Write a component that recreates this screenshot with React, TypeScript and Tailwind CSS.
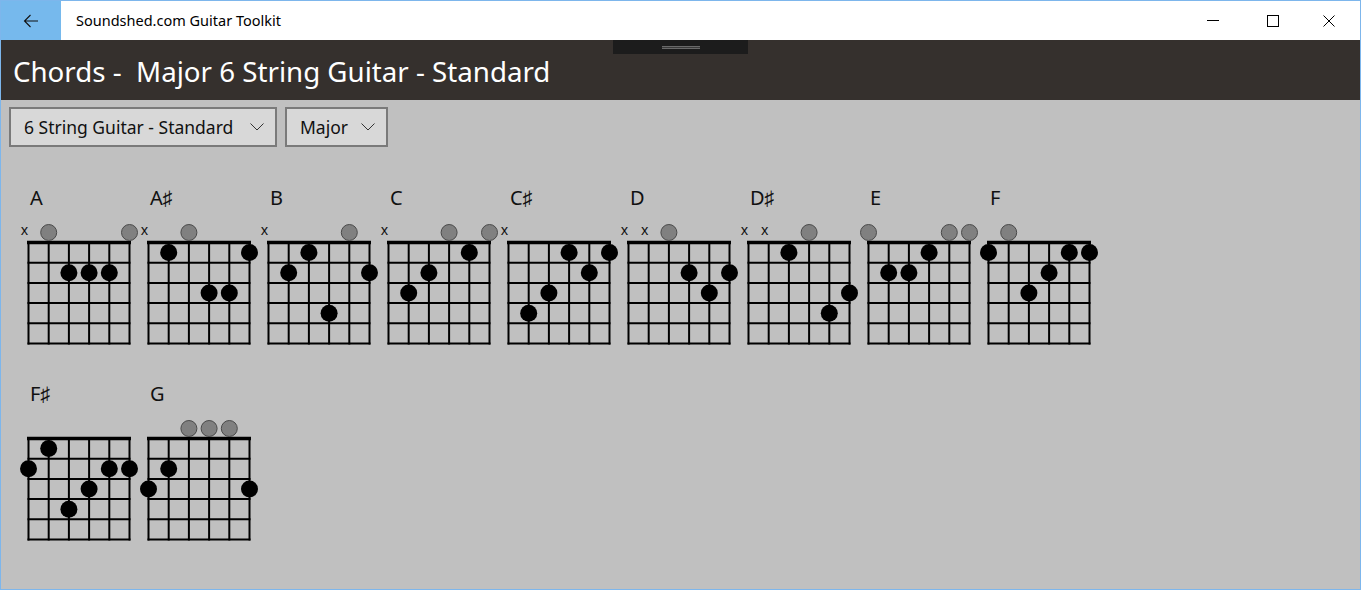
import React from 'react';

type Chord = { name: string; frets: number[] };

// -1 = muted, 0 = open, n = fret
const chords: Chord[] = [
  { name: 'A', frets: [-1, 0, 2, 2, 2, 0] },
  { name: 'A♯', frets: [-1, 1, 0, 3, 3, 1] },
  { name: 'B', frets: [-1, 2, 1, 4, 0, 2] },
  { name: 'C', frets: [-1, 3, 2, 0, 1, 0] },
  { name: 'C♯', frets: [-1, 4, 3, 1, 2, 1] },
  { name: 'D', frets: [-1, -1, 0, 2, 3, 2] },
  { name: 'D♯', frets: [-1, -1, 1, 0, 4, 3] },
  { name: 'E', frets: [0, 2, 2, 1, 0, 0] },
  { name: 'F', frets: [1, 0, 3, 2, 1, 1] },
  { name: 'F♯', frets: [2, 1, 4, 3, 2, 2] },
  { name: 'G', frets: [3, 2, 0, 0, 0, 3] },
];

const X0 = 18.5;
const Y0 = 30.5;
const STEP = 20.2;

function ChordDiagram({ chord }: { chord: Chord }) {
  const strings = [0, 1, 2, 3, 4, 5];
  const frets = [0, 1, 2, 3, 4, 5];
  const right = X0 + STEP * 5;
  const bottom = Y0 + STEP * 5;

  return (
    <div className="w-[120px] flex flex-col">
      <div className="h-[28px] leading-[28px] pl-[20px] text-[20px] text-[#111]">{chord.name}</div>
      <svg width="120" height="140" viewBox="0 0 120 140" className="overflow-visible">
        {strings.map((s) => (
          <line key={'s' + s} x1={X0 + STEP * s} y1={Y0} x2={X0 + STEP * s} y2={bottom + 1} stroke="#000" strokeWidth={2} />
        ))}
        {frets.slice(1).map((f) => (
          <line key={'f' + f} x1={X0 - 1} y1={Y0 + STEP * f} x2={right + 1} y2={Y0 + STEP * f} stroke="#000" strokeWidth={2} />
        ))}
        {/* nut */}
        <line x1={X0 - 1.5} y1={Y0} x2={right + 1.5} y2={Y0} stroke="#000" strokeWidth={3.5} />
        {chord.frets.map((f, s) => {
          const cx = X0 + STEP * s;
          if (f === -1) {
            return (
              <text key={'m' + s} x={cx - 4} y={23} textAnchor="middle" fontSize={14} fill="#111" style={{ fontFamily: '"Noto Sans", sans-serif' }}>
                x
              </text>
            );
          }
          if (f === 0) {
            return <circle key={'o' + s} cx={cx} cy={20.5} r={8} fill="#808080" stroke="#4a4a4a" strokeWidth={1} />;
          }
          return <circle key={'d' + s} cx={cx} cy={Y0 + STEP * (f - 0.5)} r={8.5} fill="#000" />;
        })}
      </svg>
    </div>
  );
}

function Dropdown({ label, width }: { label: string; width: string }) {
  return (
    <div className={`${width} h-[40px] border-2 border-[#7a7a7a] bg-[#d8d8d8] flex items-center justify-between pl-[13px] pr-[11px]`}>
      <span className="text-[17.5px] text-[#111]">{label}</span>
      <svg width="14" height="8" viewBox="0 0 14 8" className="ml-3">
        <path d="M0.5 0.5 L7 7 L13.5 0.5" fill="none" stroke="#333" strokeWidth={1} />
      </svg>
    </div>
  );
}

export default function App() {
  return (
    <div
      className="w-[1361px] h-[590px] border border-[#7db6ec] bg-[#c0c0c0] flex flex-col overflow-hidden"
      style={{ fontFamily: '"Noto Sans", "Open Sans", sans-serif' }}
    >
      {/* Title bar */}
      <div className="h-[39px] bg-white flex items-center shrink-0">
        <div className="w-[60px] h-full bg-[#76b9ed] flex items-center justify-center">
          <svg width="16" height="14" viewBox="0 0 16 14">
            <path d="M15 7 H1.5 M7.5 1 L1.5 7 L7.5 13" fill="none" stroke="#111" strokeWidth={1.1} />
          </svg>
        </div>
        <div className="pl-[15px] text-[14.5px] text-black">Soundshed.com Guitar Toolkit</div>
        <div className="flex-1" />
        <div className="flex items-center h-full">
          <div className="w-[46px] h-full flex items-center justify-center">
            <div className="w-[12px] h-px bg-black" />
          </div>
          <div className="w-[14px]" />
          <div className="w-[46px] h-full flex items-center justify-center">
            <div className="w-[12px] h-[12px] border border-black" />
          </div>
          <div className="w-[10px]" />
          <div className="w-[46px] h-full flex items-center justify-center">
            <svg width="12" height="12" viewBox="0 0 12 12">
              <path d="M0.5 0.5 L11.5 11.5 M11.5 0.5 L0.5 11.5" stroke="#000" strokeWidth={1} />
            </svg>
          </div>
          <div className="w-[8px]" />
        </div>
      </div>

      {/* Header */}
      <div className="relative h-[60px] bg-[#35302d] flex items-center pl-[12px] pt-[3px] shrink-0">
        <div className="absolute left-[612px] top-0 w-[135px] h-[14px] bg-[#1c1c1c] flex items-center justify-center">
          <div className="w-[38px] h-[3px] border-y border-[#6a6a6a] bg-[#3a3a3a]" />
        </div>
        <h1 className="text-[27.7px] text-white whitespace-pre font-normal">Chords -  Major 6 String Guitar - Standard</h1>
      </div>

      {/* Selectors */}
      <div className="flex gap-[8px] pl-[8px] pt-[7px] shrink-0">
        <Dropdown label="6 String Guitar - Standard" width="w-[268px]" />
        <Dropdown label="Major" width="w-[103px]" />
      </div>

      {/* Chords */}
      <div className="w-[1090px] pl-[9px] pt-[37px] flex flex-wrap gap-y-[28px]">
        {chords.map((c) => (
          <ChordDiagram key={c.name} chord={c} />
        ))}
      </div>
    </div>
  );
}
